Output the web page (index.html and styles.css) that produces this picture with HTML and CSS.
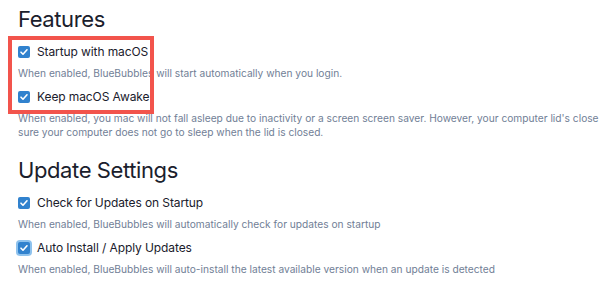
FILE: index.html
```html
<!DOCTYPE html>
<html>
<head>
<meta charset="utf-8">
<link rel="stylesheet" href="styles.css">
</head>
<body>
<div class="page">
  <section class="section">
    <h2 class="heading">Features</h2>
    <div class="group">
      <div class="highlight"></div>
      <div class="setting">
        <label class="row"><span class="box"><svg viewBox="0 0 12 12"><path d="M3 6.2l2 2 4-4.4" /></svg></span>Startup with macOS</label>
        <p class="desc">When enabled, BlueBubbles will start automatically when you login.</p>
      </div>
      <div class="setting">
        <label class="row"><span class="box"><svg viewBox="0 0 12 12"><path d="M3 6.2l2 2 4-4.4" /></svg></span>Keep macOS Awake</label>
        <p class="desc">When enabled, you mac will not fall asleep due to inactivity or a screen screen saver. However, your computer lid's close action may override this. Make sure your computer does not go to sleep when the lid is closed.</p>
      </div>
    </div>
  </section>
  <section class="section">
    <h2 class="heading">Update Settings</h2>
    <div class="group">
      <div class="setting">
        <label class="row"><span class="box"><svg viewBox="0 0 12 12"><path d="M3 6.2l2 2 4-4.4" /></svg></span>Check for Updates on Startup</label>
        <p class="desc">When enabled, BlueBubbles will automatically check for updates on startup</p>
      </div>
      <div class="setting">
        <label class="row"><span class="box focus"><svg viewBox="0 0 12 12"><path d="M3 6.2l2 2 4-4.4" /></svg></span>Auto Install / Apply Updates</label>
        <p class="desc">When enabled, BlueBubbles will auto-install the latest available version when an update is detected</p>
      </div>
    </div>
  </section>
</div>
</body>
</html>
```
FILE: styles.css
```css
html, body {
  margin: 0;
  padding: 0;
  background: #ffffff;
  overflow: hidden;
}
body {
  font-family: Inter, "Noto Sans", sans-serif;
  color: #1a202c;
}
.page {
  width: 742px;
  padding: 4px 0 0 18px;
  display: flex;
  flex-direction: column;
  gap: 16px;
}
.section {
  display: flex;
  flex-direction: column;
  gap: 8px;
}
.heading {
  margin: 0;
  font-size: 22px;
  line-height: 30px;
  font-weight: 400;
  letter-spacing: -0.4px;
}
.group {
  position: relative;
  display: flex;
  flex-direction: column;
  gap: 7px;
}
.highlight {
  position: absolute;
  left: -10px;
  top: -6px;
  width: 138px;
  height: 70px;
  border: 4px solid #f2544c;
  pointer-events: none;
}
.setting {
  display: flex;
  flex-direction: column;
  gap: 4px;
}
.row {
  display: flex;
  align-items: center;
  gap: 7px;
  font-size: 12px;
  line-height: 20px;
  letter-spacing: -0.1px;
  color: #1a202c;
}
.box {
  width: 12px;
  height: 12px;
  border-radius: 2px;
  background: #3182ce;
  display: flex;
  align-items: center;
  justify-content: center;
  flex-shrink: 0;
}
.box.focus {
  box-shadow: 0 0 0 2px rgba(66, 153, 225, 0.6);
}
.box svg {
  width: 12px;
  height: 12px;
  fill: none;
  stroke: #ffffff;
  stroke-width: 1.6;
  stroke-linecap: round;
  stroke-linejoin: round;
}
.desc {
  margin: 0;
  font-size: 10.2px;
  line-height: 14px;
  color: #718096;
}
```
